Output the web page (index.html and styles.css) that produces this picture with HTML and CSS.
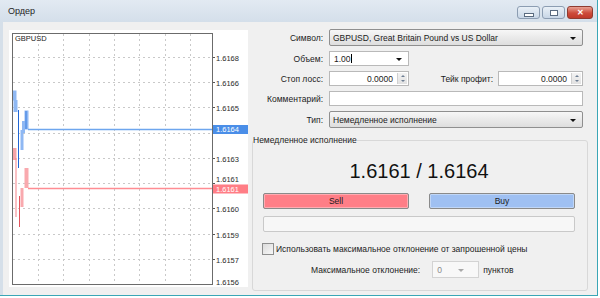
FILE: index.html
```html
<!DOCTYPE html>
<html lang="ru">
<head>
    <meta charset="UTF-8">
    <title>Ордер</title>
    <link rel="stylesheet" href="styles.css">
</head>
<body>
    <div class="window">
        <div class="titlebar">
            <span class="title">Ордер</span>
            <div class="caption">
                <div class="cap-btn min"><span></span></div>
                <div class="cap-btn max"><span></span></div>
                <div class="cap-btn close">&#x2715;</div>
            </div>
        </div>
        <div class="client">
            <div class="chart">
                <svg width="239" height="257" viewBox="9 30 239 257">
                    <g stroke="#c9c9c9" stroke-dasharray="2 3" stroke-width="1">
                        <line x1="38.5" y1="34" x2="38.5" y2="284"/>
                        <line x1="63.5" y1="34" x2="63.5" y2="284"/>
                        <line x1="89.5" y1="34" x2="89.5" y2="284"/>
                        <line x1="114.5" y1="34" x2="114.5" y2="284"/>
                        <line x1="139.5" y1="34" x2="139.5" y2="284"/>
                        <line x1="165.5" y1="34" x2="165.5" y2="284"/>
                        <line x1="190.5" y1="34" x2="190.5" y2="284"/>
                        <line x1="13" y1="57.5" x2="212" y2="57.5"/>
                        <line x1="13" y1="82.5" x2="212" y2="82.5"/>
                        <line x1="13" y1="107.5" x2="212" y2="107.5"/>
                        <line x1="13" y1="133.5" x2="212" y2="133.5"/>
                        <line x1="13" y1="158.5" x2="212" y2="158.5"/>
                        <line x1="13" y1="183.5" x2="212" y2="183.5"/>
                        <line x1="13" y1="208.5" x2="212" y2="208.5"/>
                        <line x1="13" y1="234.5" x2="212" y2="234.5"/>
                        <line x1="13" y1="259.5" x2="212" y2="259.5"/>
                    </g>
                    <g stroke="#555" stroke-width="1">
                        <line x1="212" y1="57.5" x2="215" y2="57.5"/>
                        <line x1="212" y1="82.5" x2="215" y2="82.5"/>
                        <line x1="212" y1="107.5" x2="215" y2="107.5"/>
                        <line x1="212" y1="133.5" x2="215" y2="133.5"/>
                        <line x1="212" y1="158.5" x2="215" y2="158.5"/>
                        <line x1="212" y1="183.5" x2="215" y2="183.5"/>
                        <line x1="212" y1="208.5" x2="215" y2="208.5"/>
                        <line x1="212" y1="234.5" x2="215" y2="234.5"/>
                        <line x1="212" y1="259.5" x2="215" y2="259.5"/>
                    </g>
                    <g class="axis">
                        <text x="216" y="60.5">1.6168</text>
                        <text x="216" y="85.5">1.6166</text>
                        <text x="216" y="110.5">1.6165</text>
                        <text x="216" y="161.5">1.6163</text>
                        <text x="216" y="182">1.6161</text>
                        <text x="216" y="211.5">1.6160</text>
                        <text x="216" y="237.5">1.6159</text>
                        <text x="216" y="262.5">1.6157</text>
                        <text x="216" y="285">1.6156</text>
                    </g>
                    <!-- ask ticks -->
                    <rect x="12.5" y="90.5" width="4" height="10" fill="#8fb8f3"/>
                    <rect x="13.5" y="100" width="4" height="12" fill="#8fb8f3"/>
                    <line x1="18.5" y1="110" x2="18.5" y2="168" stroke="#2066d4"/>
                    <rect x="20.5" y="130" width="3" height="20" fill="#8fb8f3"/>
                    <rect x="22" y="121" width="3" height="12" fill="#8fb8f3"/>
                    <rect x="24.5" y="110.5" width="4" height="19" fill="#8fb8f3"/>
                    <line x1="26" y1="111" x2="26" y2="129" stroke="#3a7ee0"/>
                    <line x1="28" y1="129.5" x2="212" y2="129.5" stroke="#6ea6ee" stroke-width="1.5"/>
                    <!-- bid ticks -->
                    <rect x="12.5" y="148" width="4" height="12" fill="#f5a4a9"/>
                    <line x1="16" y1="158" x2="16" y2="217" stroke="#f58389"/>
                    <line x1="19.5" y1="196" x2="19.5" y2="227" stroke="#e2535b"/>
                    <rect x="20.5" y="188" width="3" height="19" fill="#f9a9ae"/>
                    <rect x="24.5" y="168" width="4" height="20" fill="#f9a9ae"/>
                    <line x1="28" y1="188.5" x2="212" y2="188.5" stroke="#ff8d93" stroke-width="1.5"/>
                    <rect x="12.5" y="33.5" width="200" height="251" fill="none" stroke="#6b6b6b"/>
                    <text class="symbol" x="15" y="41">GBPUSD</text>
                    <rect x="213" y="125" width="35" height="9" fill="#4a8ee8"/>
                    <text class="tag" x="216" y="132.3">1.6164</text>
                    <rect x="213" y="184.5" width="35" height="9" fill="#ff7d85"/>
                    <text class="tag" x="216" y="191.8">1.6161</text>
                </svg>
            </div>
            <div class="panel">
                <div class="row r-symbol">
                    <label>Символ:</label>
                    <div class="combo wide">GBPUSD, Great Britain Pound vs US Dollar<span class="arrow"></span></div>
                </div>
                <div class="row">
                    <label>Объем:</label>
                    <div class="field edit small">1.00<span class="caret"></span><span class="arrow"></span></div>
                </div>
                <div class="row">
                    <label>Стоп лосс:</label>
                    <div class="field small num">0.0000<span class="spin"><i class="up"></i><i class="down"></i></span></div>
                    <label class="tp">Тейк профит:</label>
                    <div class="field tp-field num">0.0000<span class="spin"><i class="up"></i><i class="down"></i></span></div>
                </div>
                <div class="row">
                    <label>Комментарий:</label>
                    <div class="field wide"></div>
                </div>
                <div class="row r-type">
                    <label>Тип:</label>
                    <div class="combo wide">Немедленное исполнение<span class="arrow"></span></div>
                </div>
                <fieldset class="group">
                    <legend>Немедленное исполнение</legend>
                    <div class="price">1.6161 / 1.6164</div>
                    <div class="trade">
                        <div class="btn sell">Sell</div>
                        <div class="btn buy">Buy</div>
                    </div>
                    <div class="status"></div>
                    <div class="check"><span class="box"></span>Использовать максимальное отклонение от запрошенной цены</div>
                    <div class="deviation">
                        <span>Максимальное отклонение:</span>
                        <div class="field dev">0<span class="arrow"></span></div>
                        <span>пунктов</span>
                    </div>
                </fieldset>
            </div>
        </div>
    </div>
</body>
</html>
```

FILE: styles.css
```css
body {
    margin: 0;
    background: #ffffff;
    font-family: "Liberation Sans", Arial, sans-serif;
    font-size: 8.5px;
    color: #1b1b1b;
}
.window {
    width: 597px;
    height: 295px;
    display: flex;
    flex-direction: column;
    background: #f0f0f0;
    border-right: 1px solid #3aa6b6;
    border-bottom: 1px solid #3aa6b6;
}
.titlebar {
    height: 22px;
    display: flex;
    align-items: center;
    padding-left: 8px;
    background: linear-gradient(#e2eaf2, #d4dfea);
    box-sizing: border-box;
}
.title {
    font-size: 9px;
    color: #1e1e1e;
    flex-grow: 1;
}
.caption {
    display: flex;
    gap: 2px;
    margin-right: 4px;
    align-self: flex-start;
    margin-top: 6px;
}
.cap-btn {
    height: 11px;
    border: 1px solid #8c9db2;
    border-radius: 3px;
    background: linear-gradient(#e9f0f7, #c8d6e6);
    display: flex;
    align-items: center;
    justify-content: center;
}
.min, .max {
    width: 21px;
}
.min span {
    width: 8px;
    height: 2px;
    margin-top: 4px;
    background: #fff;
    border: 1px solid #5a6b80;
}
.max span {
    width: 6px;
    height: 4px;
    background: #fff;
    border: 1px solid #5a6b80;
}
.close {
    width: 24px;
    color: #fff;
    font-size: 8px;
    font-weight: bold;
    border-color: #8f3b30;
    background: linear-gradient(#e8a092, #cd4b3a 55%, #c0392a);
}
.client {
    flex-grow: 1;
    display: flex;
    gap: 4px;
    padding: 8px 0 0 6px;
    border-left: 3px solid #d5dfe9;
}
.chart {
    width: 239px;
    height: 257px;
    background: #ffffff;
}
.chart svg {
    display: block;
}
.axis text {
    font-size: 7.5px;
    fill: #2a2a2a;
}
.symbol {
    font-size: 7.5px;
    fill: #222;
}
.tag {
    font-size: 7.5px;
    fill: #ffffff;
}
.panel {
    width: 336px;
    margin-top: -1px;
    display: flex;
    flex-direction: column;
}
.row {
    display: flex;
    align-items: center;
    height: 15px;
    margin-bottom: 5px;
}
.row label {
    width: 71px;
    margin-right: 6px;
    text-align: right;
    flex-shrink: 0;
}
.r-symbol {
    height: 17px;
}
.r-type {
    height: 17px;
    margin-bottom: 7px;
}
.field, .combo {
    position: relative;
    height: 100%;
    box-sizing: border-box;
    border: 1px solid #b9b9b9;
    background: #fff;
    display: flex;
    align-items: center;
    padding-left: 4px;
}
.combo {
    border-color: #8f8f8f;
    border-radius: 2px;
    background: linear-gradient(#f7f7f7, #eaeaea 50%, #dedede);
    padding-left: 3px;
}
.wide {
    width: 254px;
}
.small {
    width: 80px;
}
.tp {
    flex-grow: 1;
    width: auto !important;
    margin-right: 5px !important;
}
.tp-field {
    width: 85px;
    margin-right: 5px;
}
.num {
    justify-content: flex-end;
    padding-right: 15px;
}
.arrow {
    position: absolute;
    right: 6px;
    top: 50%;
    margin-top: -1px;
    border-left: 3px solid transparent;
    border-right: 3px solid transparent;
    border-top: 3px solid #111;
}
.caret {
    width: 1px;
    height: 9px;
    background: #000;
}
.spin {
    position: absolute;
    right: 1px;
    top: 1px;
    bottom: 1px;
    width: 9px;
    display: flex;
    flex-direction: column;
    justify-content: space-around;
    align-items: center;
    background: linear-gradient(#f3f3f3, #e1e1e1);
    border-left: 1px solid #d0d0d0;
}
.spin i {
    border-left: 2px solid transparent;
    border-right: 2px solid transparent;
}
.spin .up {
    border-bottom: 2px solid #6e7f93;
}
.spin .down {
    border-top: 2px solid #6e7f93;
}
.group {
    margin: 0;
    padding: 0 12px 0 10px;
    height: 156px;
    box-sizing: border-box;
    border: 1px solid #d8d8d8;
    border-radius: 3px;
    width: 336px;
}
.group legend {
    padding: 0;
    margin-left: -10px;
    color: #1b1b1b;
}
.price {
    font-size: 20px;
    text-align: center;
    color: #111;
    margin-top: 15px;
    line-height: 23px;
}
.trade {
    display: flex;
    justify-content: space-between;
    margin-top: 10px;
}
.btn {
    width: 146px;
    height: 16px;
    box-sizing: border-box;
    border: 1px solid #8a8a8a;
    border-radius: 2px;
    box-shadow: inset 0 0 0 1px rgba(255, 255, 255, 0.35);
    display: flex;
    align-items: center;
    justify-content: center;
}
.sell {
    background: #ff7e87;
}
.buy {
    background: #9fc0f2;
}
.status {
    margin-top: 7px;
    height: 16px;
    box-sizing: border-box;
    border: 1px solid #c9c9c9;
    border-radius: 2px;
    background: #f7f7f7;
}
.check {
    display: flex;
    align-items: center;
    margin-top: 11px;
    margin-left: -1px;
}
.box {
    width: 10px;
    height: 10px;
    border: 1px solid #8e8f8f;
    background: linear-gradient(135deg, #dcdcdc, #f7f7f7);
    margin-right: 2px;
}
.deviation {
    display: flex;
    align-items: center;
    gap: 4px;
    margin-top: 6px;
    padding-left: 48px;
}
.deviation span:first-child {
    margin-right: 8px;
}
.dev {
    width: 47px;
    height: 17px;
    color: #8a8a8a;
    border-color: #d3d3d3;
    background: #f8f8f8;
}
.dev .arrow {
    border-top-color: #a8a8a8;
}
```
